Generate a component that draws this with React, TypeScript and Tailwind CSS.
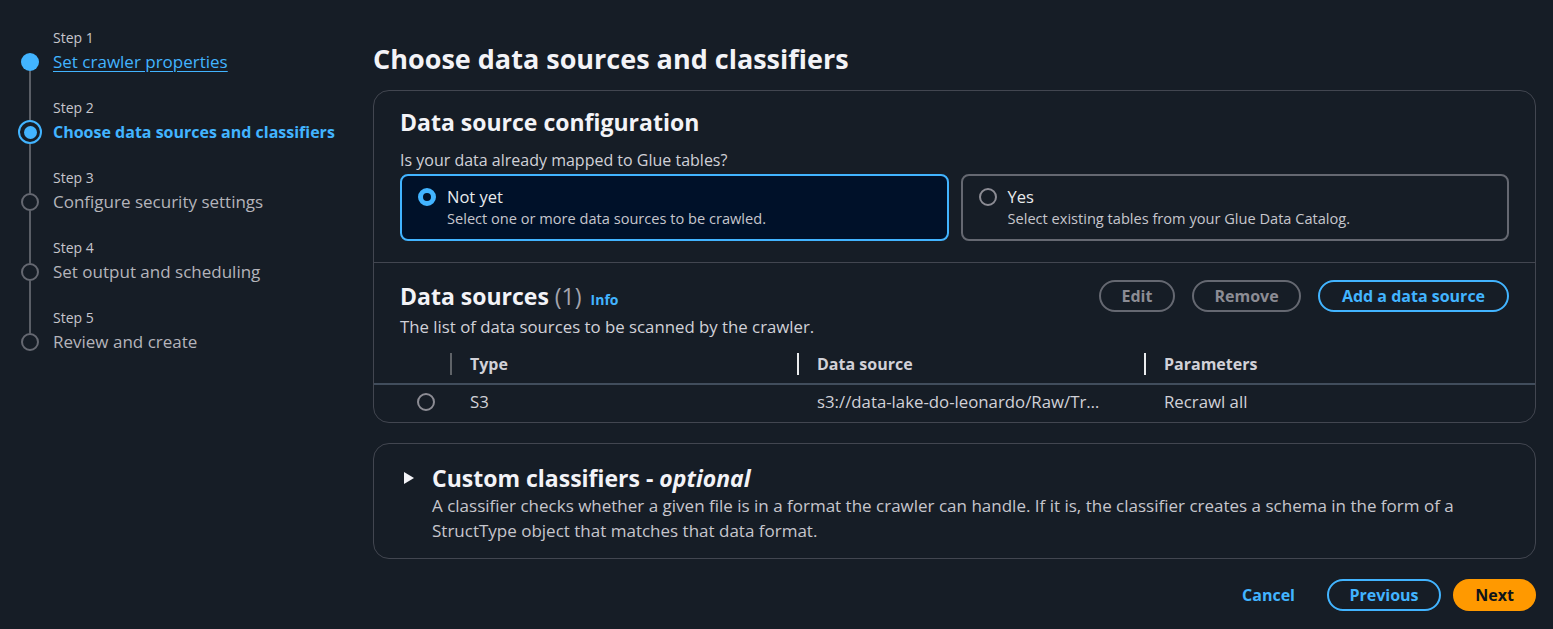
import React from "react";

const STEPS = [
  { label: "Step 1", title: "Set crawler properties", state: "done" },
  { label: "Step 2", title: "Choose data sources and classifiers", state: "active" },
  { label: "Step 3", title: "Configure security settings", state: "todo" },
  { label: "Step 4", title: "Set output and scheduling", state: "todo" },
  { label: "Step 5", title: "Review and create", state: "todo" },
];

function StepDot({ state }: { state: string }) {
  if (state === "done") return <div className="h-[18px] w-[18px] shrink-0 rounded-full bg-[#42b4ff]" />;
  if (state === "active")
    return (
      <div className="flex h-[24px] w-[24px] shrink-0 items-center justify-center rounded-full border-2 border-[#42b4ff]">
        <div className="h-[13px] w-[13px] rounded-full bg-[#42b4ff]" />
      </div>
    );
  return <div className="h-[18px] w-[18px] shrink-0 rounded-full border-2 border-[#656871]" />;
}

function Stepper() {
  return (
    <nav className="w-[373px] shrink-0 pl-[20px] pt-[26px]">
      {STEPS.map((s, i) => {
        const first = i === 0;
        const last = i === STEPS.length - 1;
        return (
          <div key={s.label} className="grid grid-cols-[20px_1fr] gap-x-[13px]">
            {/* label row */}
            <div className="flex justify-center">
              <div className={`w-[2px] ${first ? "" : "bg-[#5a5e66]"}`} />
            </div>
            <div className="h-[24px] text-[14px] leading-[24px] text-[#c6c6cd]">{s.label}</div>
            {/* title row */}
            <div className="flex flex-col items-center">
              <div className={`w-[2px] flex-1 ${first ? "" : "bg-[#5a5e66]"}`} />
              <StepDot state={s.state} />
              <div className={`w-[2px] flex-1 ${last ? "" : "bg-[#5a5e66]"}`} />
            </div>
            <div className="h-[24px] whitespace-nowrap leading-[24px]">
              {s.state === "done" && <span className="text-[17px] text-[#42b4ff] underline underline-offset-[3px]">{s.title}</span>}
              {s.state === "active" && <span className="text-[16px] font-bold text-[#42b4ff]">{s.title}</span>}
              {s.state === "todo" && <span className="text-[17px] text-[#b4b4bb]">{s.title}</span>}
            </div>
            {/* spacer */}
            {!last && (
              <>
                <div className="flex h-[22px] justify-center">
                  <div className="w-[2px] bg-[#5a5e66]" />
                </div>
                <div />
              </>
            )}
          </div>
        );
      })}
    </nav>
  );
}

function RadioCard({ selected, title, desc }: { selected: boolean; title: string; desc: string }) {
  return (
    <div
      className={`flex flex-1 gap-[11px] rounded-[8px] border-2 px-[16px] pb-[11px] pt-[10px] ${
        selected ? "border-[#42b4ff] bg-[#001129]" : "border-[#656871]"
      }`}
    >
      <div className="flex h-[22px] items-center">
        {selected ? (
          <div className="h-[18px] w-[18px] rounded-full border-[5px] border-[#42b4ff] bg-[#001129]" />
        ) : (
          <div className="h-[18px] w-[18px] rounded-full border-2 border-[#8c8c94]" />
        )}
      </div>
      <div>
        <div className="text-[16.5px] leading-[22px] text-[#e9ebed]">{title}</div>
        <div className="text-[14.6px] leading-[20px] text-[#c6c6cd]">{desc}</div>
      </div>
    </div>
  );
}

function PillButton({ children, tone, className = "" }: { children: React.ReactNode; tone: "gray" | "blue"; className?: string }) {
  return (
    <button
      className={`flex h-[32px] items-center justify-center rounded-full border-2 text-[16px] font-bold ${
        tone === "blue" ? "border-[#42b4ff] text-[#42b4ff]" : "border-[#656871] text-[#8c8c94]"
      } ${className}`}
    >
      {children}
    </button>
  );
}

export default function App() {
  return (
    <div className="flex min-h-screen bg-[#161d26] font-['Open_Sans',sans-serif] text-[#c6c6cd]">
      <Stepper />

      <main className="flex-1 pr-[17px] pt-[41px]">
        <h1 className="text-[27px] font-bold leading-[36px] text-[#f3f3f7]">Choose data sources and classifiers</h1>

        {/* Data source configuration */}
        <section className="mt-[13px] rounded-[16px] border border-[#424650]">
          <div className="px-[26px] pb-[21px] pt-[15px]">
            <h2 className="text-[23px] font-bold leading-[32px] text-[#f3f3f7]">Data source configuration</h2>
            <div className="mt-[10px] text-[16px] leading-[24px] text-[#d1d1d8]">Is your data already mapped to Glue tables?</div>
            <div className="mt-[2px] flex gap-[12px]">
              <RadioCard selected title="Not yet" desc="Select one or more data sources to be crawled." />
              <RadioCard selected={false} title="Yes" desc="Select existing tables from your Glue Data Catalog." />
            </div>
          </div>

          <div className="border-t border-[#424650] pt-[17px]">
            <div className="flex items-center justify-between px-[26px]">
              <div className="flex items-baseline gap-[9px]">
                <h2 className="text-[23px] font-bold leading-[32px] text-[#f3f3f7]">
                  Data sources <span className="font-normal text-[#a4a4ad]">(1)</span>
                </h2>
                <span className="text-[14px] font-bold text-[#42b4ff]">Info</span>
              </div>
              <div className="flex gap-[17px]">
                <PillButton tone="gray" className="w-[76px]">Edit</PillButton>
                <PillButton tone="gray" className="w-[109px]">Remove</PillButton>
                <PillButton tone="blue" className="w-[191px]">Add a data source</PillButton>
              </div>
            </div>
            <div className="mt-[3px] px-[26px] text-[16.8px] leading-[24px] text-[#d1d1d8]">The list of data sources to be scanned by the crawler.</div>

            {/* table */}
            <div className="mt-[6px]">
              <div className="grid h-[40px] grid-cols-[76px_347px_347px_1fr] items-center border-b-2 border-[#414d5c] text-[16px] font-bold text-[#d1d1d8]">
                <div />
                <div className="flex items-center">
                  <span className="h-[22px] w-[2px] bg-[#5f6368]" />
                  <span className="pl-[18px]">Type</span>
                </div>
                <div className="flex items-center">
                  <span className="h-[22px] w-[2px] bg-[#e9ebed]" />
                  <span className="pl-[18px]">Data source</span>
                </div>
                <div className="flex items-center">
                  <span className="h-[22px] w-[2px] bg-[#e9ebed]" />
                  <span className="pl-[18px]">Parameters</span>
                </div>
              </div>
              <div className="grid h-[37px] grid-cols-[76px_347px_347px_1fr] items-center pb-[3px] text-[16.8px] text-[#d1d1d8]">
                <div className="flex justify-end pr-[15px]">
                  <div className="h-[18px] w-[18px] rounded-full border-2 border-[#8c8c94]" />
                </div>
                <div className="pl-[20px]">S3</div>
                <div className="whitespace-nowrap pl-[20px]">s3://data-lake-do-leonardo/Raw/Tr…</div>
                <div className="pl-[20px]">Recrawl all</div>
              </div>
            </div>
          </div>
        </section>

        {/* Custom classifiers */}
        <section className="mt-[20px] rounded-[16px] border border-[#424650] pb-[15px] pl-[29px] pr-[26px] pt-[19px]">
          <div className="flex items-center gap-[17px]">
            <svg width="12" height="14" viewBox="0 0 12 14" className="shrink-0">
              <path d="M1 1 L11 7 L1 13 Z" fill="#f3f3f7" />
            </svg>
            <h2 className="text-[23px] font-bold leading-[30px] text-[#f3f3f7]">
              Custom classifiers - <i>optional</i>
            </h2>
          </div>
          <p className="max-w-[1075px] pl-[29px] text-[17px] leading-[25px] text-[#c6c6cd]">
            A classifier checks whether a given file is in a format the crawler can handle. If it is, the classifier creates a schema in the form of a StructType object that matches that data format.
          </p>
        </section>

        {/* Footer actions */}
        <div className="mt-[20px] flex items-center justify-end gap-[12px] pb-[18px]">
          <button className="px-[20px] text-[16px] font-bold text-[#42b4ff]">Cancel</button>
          <PillButton tone="blue" className="w-[114px]">Previous</PillButton>
          <button className="flex h-[32px] w-[83px] items-center justify-center rounded-full bg-[#ff9900] text-[16px] font-bold text-[#0f141a]">
            Next
          </button>
        </div>
      </main>
    </div>
  );
}
